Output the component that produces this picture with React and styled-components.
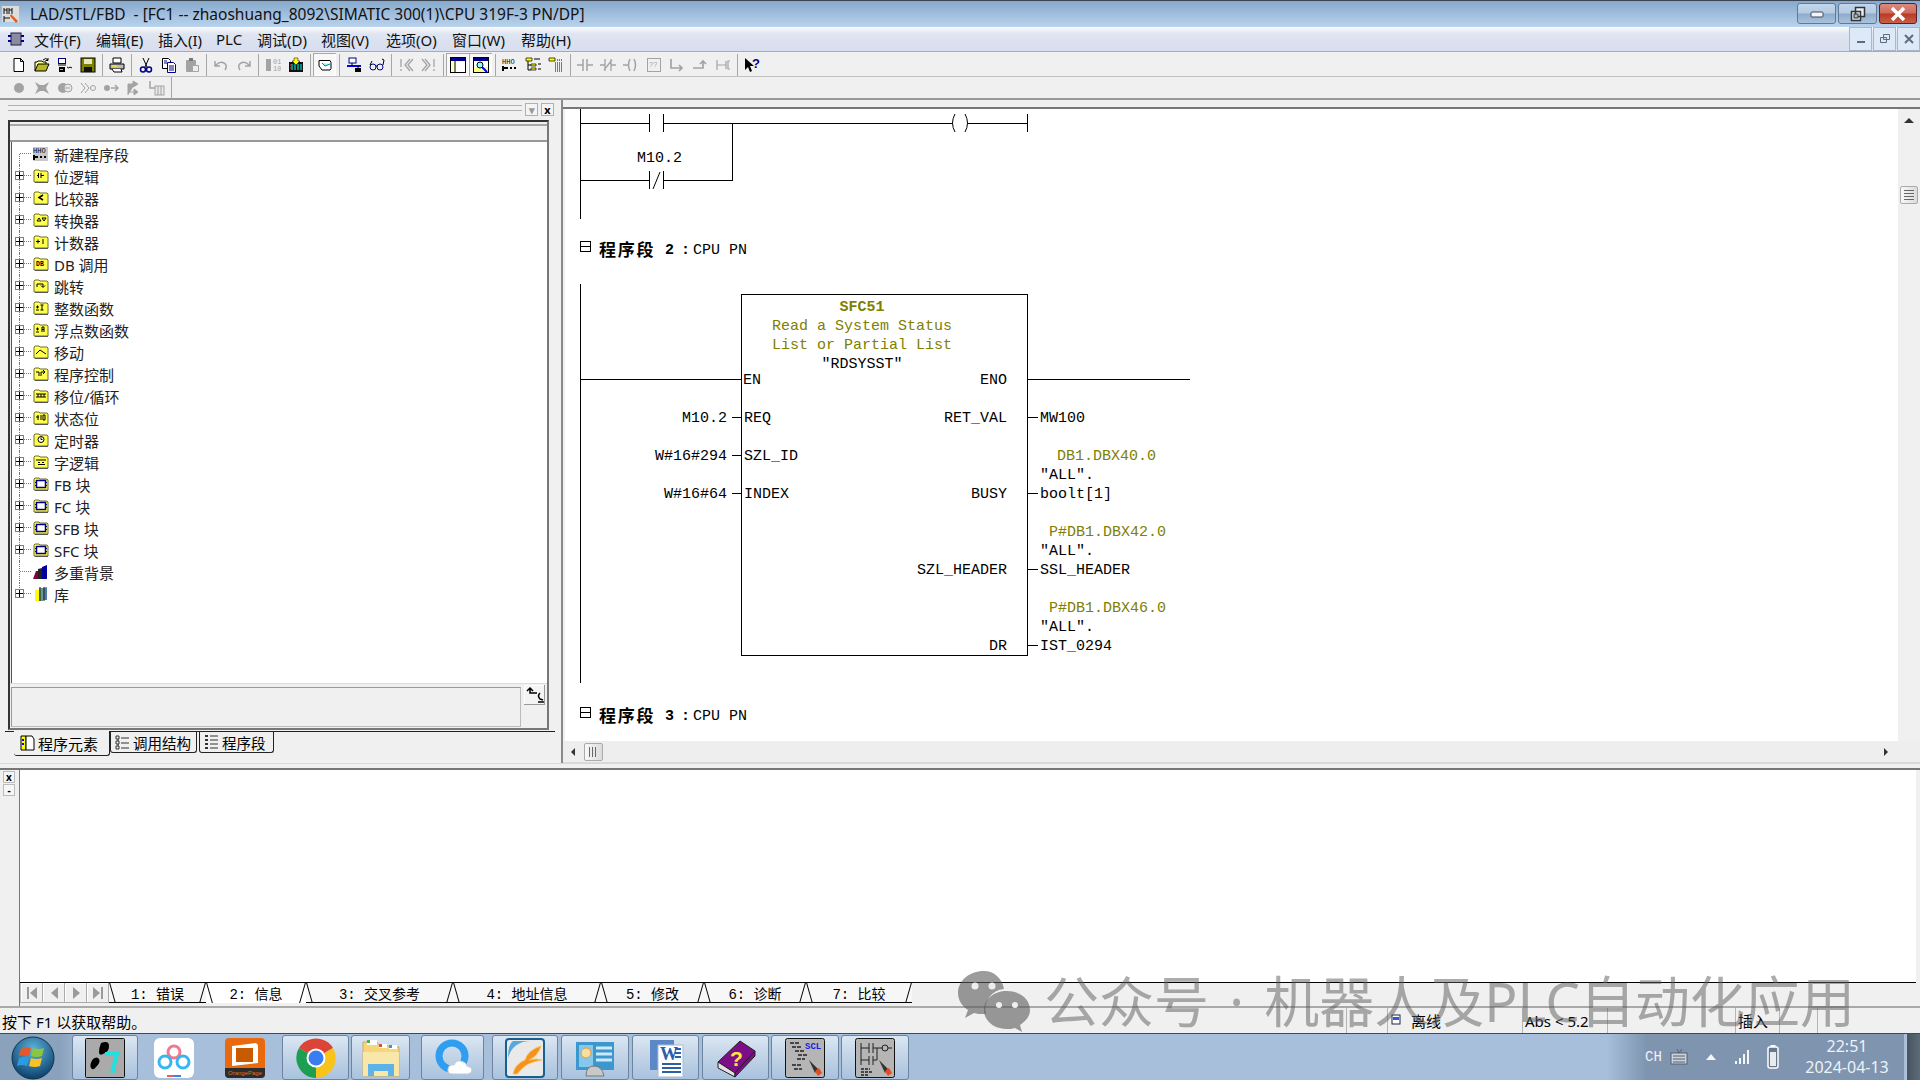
import styled, { createGlobalStyle } from 'styled-components';

const UI_FONT = '"Noto Sans", "Noto Sans CJK SC", sans-serif';
const MONO_FONT = '"Liberation Mono", "Noto Sans CJK SC", monospace';
const GREY = '#a3a3a3';

const GlobalStyle = createGlobalStyle`
    html, body { margin: 0; padding: 0; background: #f0f0f0; overflow: hidden; }
    * { box-sizing: border-box; }
`;

const Screen = styled.div`
    position: relative;
    width: 1920px;
    height: 1080px;
    display: flex;
    flex-direction: column;
    overflow: hidden;
    background: #f0f0f0;
    color: #000;
    font: 14px ${UI_FONT};
`;

/* title + menu */
const TitleBar = styled.div`
    height: 27px;
    flex: none;
    display: flex;
    align-items: center;
    padding-left: 2px;
    border-top: 1px solid #3c4652;
    background: linear-gradient(#86a9cb, #a3c0de 55%, #b9d3ec);
`;
const TitleText = styled.span`
    margin-left: 10px;
    font-size: 15.5px;
    color: #111;
    white-space: pre;
`;
const WindowButtons = styled.div`
    margin-left: auto;
    display: flex;
    gap: 2px;
    padding-right: 3px;
    align-self: flex-start;
    margin-top: 2px;
`;
const WindowButton = styled.div`
    width: ${(p) => (p.$close ? 38 : 39)}px;
    height: 21px;
    display: flex;
    align-items: center;
    justify-content: center;
    border: 1px solid ${(p) => (p.$close ? '#5b2030' : '#5f7a97')};
    border-radius: 3px;
    background: ${(p) =>
        p.$close
            ? 'linear-gradient(#d98a80, #d06a5c 48%, #b83a22 52%, #c8604a)'
            : 'linear-gradient(#c3d6ea, #b4cbe3 48%, #8fabc9 52%, #a9c3de)'};
`;
const MenuBar = styled.div`
    height: 25px;
    flex: none;
    display: flex;
    align-items: center;
    font-size: 15px;
    border-bottom: 1px solid #a5acb8;
    background: linear-gradient(#fbfcfe, #dfe4f1 30%, #d8deee);
`;
const MenuGrip = styled.span`
    width: 34px;
    display: flex;
    justify-content: center;
    padding-right: 2px;
`;
const MenuItem = styled.span`
    width: ${(p) => p.$w}px;
    color: #111;
`;
const MdiButtons = styled.div`
    margin-left: auto;
    display: flex;
    gap: 1px;
    align-self: stretch;
`;
const MdiButton = styled.div`
    width: 23px;
    display: flex;
    align-items: center;
    justify-content: center;
    border: 1px solid #a9b8c9;
    background: #dde9f6;
`;

/* toolbars */
const ToolRow = styled.div`
    height: ${(p) => p.$h}px;
    flex: none;
    padding: ${(p) => p.$nudge || 0}px 0 0 7px;
    display: flex;
    align-items: center;
    border-bottom: ${(p) => p.$line};
`;
const ToolButton = styled.span`
    width: 23px;
    height: 23px;
    flex: none;
    display: flex;
    align-items: center;
    justify-content: center;
    ${(p) => p.$pressed && 'background: #f8f8f8; box-shadow: inset 1px 1px 0 #a8a8a8, inset -1px -1px 0 #fff;'}
`;
const ToolSep = styled.span`
    width: 6px;
    height: 22px;
    flex: none;
    display: flex;
    justify-content: center;
    &::after { content: ''; width: 1px; background: #a6a6a6; }
`;

/* workspace */
const Workspace = styled.div`
    height: 664px;
    flex: none;
    display: flex;
    border-bottom: 1px solid #d8d8d8;
`;
const LeftPane = styled.div`
    width: 563px;
    flex: none;
    display: flex;
    flex-direction: column;
    border-right: 2px solid #8a8a8a;
`;
const GripRow = styled.div`
    height: 20px;
    display: flex;
    align-items: flex-start;
    gap: 3px;
    padding: 5px 0 0 8px;
`;
const GripLines = styled.div`
    width: 514px;
    height: 6px;
    flex: none;
    border-top: 1px solid #b0b0b0;
    border-bottom: 1px solid #b0b0b0;
`;
const GripButton = styled.div`
    width: 13px;
    height: 13px;
    flex: none;
    margin-top: -2px;
    display: flex;
    align-items: center;
    justify-content: center;
    font: bold 11px ${UI_FONT};
    line-height: 1;
    background: #f4f4f4;
    border: 1px solid #b0b0b0;
    color: ${(p) => p.$ink};
`;
const PanelFrame = styled.div`
    margin-left: 8px;
    width: 541px;
    height: 610px;
    display: flex;
    flex-direction: column;
    border: 2px solid;
    border-color: #333 #777 #777 #333;
`;
const PanelHead = styled.div`
    height: 18px;
    flex: none;
    border-top: 2px solid #a8a8a8;
    margin-top: 2px;
    border-bottom: 2px solid #999;
`;
const TreeBox = styled.div`
    flex: 1;
    background: #fff;
    margin-left: 1px;
    border-left: 1px solid #555;
    padding-top: 1px;
`;
const TreeRow = styled.div`
    position: relative;
    height: 22px;
    padding-left: 21px;
    display: flex;
    align-items: center;
    font-size: 15px;
    color: #222;
    &::before {
        content: '';
        position: absolute;
        left: 7px;
        top: ${(p) => (p.$first ? 11 : 0)}px;
        height: ${(p) => (p.$last ? 11 : p.$first ? 11 : 22)}px;
        border-left: 1px dotted #777;
    }
    &::after {
        content: '';
        position: absolute;
        left: 8px;
        top: 10px;
        width: 11px;
        border-top: 1px dotted #777;
    }
`;
const Expander = styled.span`
    position: absolute;
    z-index: 1;
    left: 3px;
    top: 6px;
    width: 9px;
    height: 9px;
    border: 1px solid #808080;
    background: linear-gradient(to bottom, transparent 3px, #000 3px, #000 4px, transparent 4px),
        linear-gradient(to right, transparent 3px, #000 3px, #000 4px, transparent 4px), #fff;
`;
const TreeLabel = styled.span`
    margin-left: 5px;
    white-space: pre;
`;
const HintRow = styled.div`
    height: 45px;
    flex: none;
    display: flex;
    align-items: flex-start;
    gap: 3px;
    padding: 3px 0 0 1px;
    border-top: 1px solid #dcdcdc;
`;
const HintField = styled.div`
    width: 510px;
    height: 40px;
    border: 1px solid #bbb;
    border-top-color: #999;
    border-left-color: #999;
`;
const HintButton = styled.div`
    width: 21px;
    height: 20px;
    margin-top: -2px;
    overflow: hidden;
    background: #f4f4f4;
    box-shadow: inset -1px -1px 0 #999, inset 1px 1px 0 #fff;
`;
const PanelTabs = styled.div`
    display: flex;
    padding-left: 9px;
    border-top: 1px solid #222;
    margin: 1px 6px 0 5px;
    height: 27px;
    align-items: flex-start;
`;
const PanelTab = styled.div`
    width: ${(p) => p.$w}px;
    height: ${(p) => (p.$active ? 25 : 21)}px;
    margin-top: ${(p) => (p.$active ? -1 : 0)}px;
    margin-right: ${(p) => (p.$active ? 0 : 2)}px;
    display: flex;
    align-items: center;
    gap: 3px;
    padding-left: ${(p) => (p.$active ? 5 : 3)}px;
    font-size: ${(p) => (p.$active ? 15 : 14.5)}px;
    white-space: pre;
    border: solid #222;
    border-width: 0 1px 1px ${(p) => (p.$active ? 0 : 1)}px;
    border-radius: 0 0 3px 3px;
    background: #f0f0f0;
`;

const RightPane = styled.div`
    flex: 1;
    display: flex;
    flex-direction: column;
    min-width: 0;
`;
const RightTop = styled.div`
    height: 9px;
    flex: none;
    border-bottom: 2px solid #777;
`;
const EditorRow = styled.div`
    flex: 1;
    display: flex;
    min-height: 0;
`;
const Canvas = styled.div`
    flex: 1;
    margin-left: 2px;
    background: #fff;
    display: flex;
    flex-direction: column;
    align-items: flex-start;
    overflow: hidden;
`;
const Rung = styled.svg`
    display: block;
    flex: none;
    shape-rendering: crispEdges;
`;
const Label = styled.text`
    font: ${(p) => (p.$bold ? 'bold ' : '')}15px ${MONO_FONT};
    fill: ${(p) => (p.$olive ? '#808000' : '#000')};
    shape-rendering: auto;
`;
const NetworkHead = styled.div`
    margin: ${(p) => p.$top}px 0 ${(p) => p.$bottom}px 15px;
    height: 22px;
    display: flex;
    align-items: center;
    white-space: pre;
`;
const Collapse = styled.span`
    width: 11px;
    height: 11px;
    margin: -5px 8px 0 0;
    border: 1px solid #000;
    background: linear-gradient(to bottom, transparent 4px, #000 4px, #000 5px, transparent 5px);
`;
const NetworkTitle = styled.span`
    width: 66px;
    margin-top: -2px;
    font: bold 17px "Noto Sans CJK SC", sans-serif;
    letter-spacing: 1.7px;
`;
const NetworkNumber = styled.span`
    width: 28px;
    margin-top: 2px;
    font: bold 15px ${MONO_FONT};
    letter-spacing: 7px;
`;
const NetworkName = styled.span`
    margin-top: 2px;
    font: 15px ${MONO_FONT};
`;
const VScroll = styled.div`
    width: 22px;
    flex: none;
    display: flex;
    flex-direction: column;
    align-items: center;
    padding-top: 9px;
    background: #f0f0f0;
`;
const Thumb = styled.div`
    width: ${(p) => p.$w}px;
    height: ${(p) => p.$h}px;
    display: flex;
    align-items: center;
    justify-content: center;
    border: 1px solid #aaa;
    border-radius: 2px;
    background: linear-gradient(to right, #f8f8f8, #dcdcdc);
`;
const Grooves = styled.span`
    width: ${(p) => p.$w}px;
    height: ${(p) => p.$h}px;
    background: repeating-linear-gradient(${(p) => p.$dir}, #666 0 1px, transparent 1px 3px);
`;
const ArrowUp = styled.span`
    width: 0;
    height: 0;
    margin-bottom: 63px;
    border: 5px solid transparent;
    border-top: 0;
    border-bottom: 5px solid #333;
`;
const HScroll = styled.div`
    height: 22px;
    flex: none;
    display: flex;
    align-items: center;
    padding: 0 32px 0 8px;
    gap: 9px;
    background: #eeeeee;
    border-bottom: 1px solid #dadada;
`;
const ArrowSide = styled.span`
    width: 0;
    height: 0;
    border: 4px solid transparent;
    ${(p) => (p.$right ? 'margin-left: auto; border-right: 0; border-left: 4px solid #333;' : 'border-left: 0; border-right: 4px solid #333;')}
`;

/* output window */
const Splitter = styled.div`
    height: 6px;
    flex: none;
    border-bottom: 2px solid #777;
`;
const OutputPane = styled.div`
    height: 238px;
    flex: none;
    display: flex;
    border-bottom: 2px solid #a9a9a9;
`;
const OutputGutter = styled.div`
    width: 19px;
    flex: none;
    padding: 1px 0 0 3px;
    display: flex;
    flex-direction: column;
    gap: 1px;
`;
const DockButton = styled.div`
    width: 12px;
    height: 12px;
    display: flex;
    align-items: center;
    justify-content: center;
    font: bold 10px ${UI_FONT};
    background: #f6f6f6;
    border: 1px solid #bbb;
`;
const OutputMain = styled.div`
    width: 1897px;
    display: flex;
    flex-direction: column;
    border-left: 1px solid #777;
`;
const OutputBody = styled.div`
    height: 213px;
    background: #fff;
    border-bottom: 1px solid #000;
`;
const TabStrip = styled.div`
    height: 20px;
    display: flex;
    font: 14px ${MONO_FONT};
    border-left: 1px solid #bbb;
`;
const NavButton = styled.span`
    width: 22px;
    display: flex;
    align-items: center;
    justify-content: center;
    gap: 1px;
    background: #f0f0f0;
    box-shadow: inset -1px -1px 0 #aaa, inset 1px 1px 0 #fff;
`;
const NavTriangle = styled.span`
    width: 0;
    height: 0;
    border: 6px solid transparent;
    ${(p) => (p.$left ? 'border-left: 0; border-right: 7px solid #9a9a9a;' : 'border-right: 0; border-left: 7px solid #9a9a9a;')}
`;
const NavStop = styled.span`
    width: 2px;
    height: 12px;
    background: #9a9a9a;
`;
const OutputTab = styled.div`
    position: relative;
    width: ${(p) => p.$w}px;
    flex: none;
    display: flex;
    align-items: center;
    justify-content: center;
    white-space: pre;
    background: ${(p) => (p.$active ? '#fff' : '#f7f7f7')};
    border-bottom: 1px solid ${(p) => (p.$active ? '#fff' : '#000')};
    &::before, &::after {
        content: '';
        position: absolute;
        top: 0;
        bottom: -1px;
        width: 1px;
        background: #000;
    }
    &::before { left: 3px; transform: skewX(16deg); }
    &::after { right: 3px; transform: skewX(-16deg); }
`;

/* status + taskbar */
const StatusBar = styled.div`
    height: 25px;
    flex: none;
    display: flex;
    align-items: center;
    padding-left: 2px;
    font-size: 15px;
    white-space: pre;
`;
const StatusCell = styled.div`
    width: ${(p) => p.$w}px;
    height: 100%;
    flex: none;
    padding-left: 2px;
    display: flex;
    align-items: center;
    gap: 9px;
    border-left: 1px solid #b5b5b5;
`;
const StatusHelp = styled.div`
    flex: 1;
    padding-top: 1px;
`;
const Taskbar = styled.div`
    height: 47px;
    flex: none;
    display: flex;
    gap: 2px;
    padding-top: 1px;
    border-top: 1px solid #3d4a59;
    background: linear-gradient(to right, #8ba2bc 0, #8ba2bc 60px, #a7bfdb 90px);
`;
const StartOrb = styled.div`
    width: 70px;
    flex: none;
    display: flex;
    align-items: center;
    justify-content: center;
    padding-right: 4px;
`;
const TaskButton = styled.div`
    width: ${(p) => p.$w}px;
    margin-left: ${(p) => p.$gap || 0}px;
    flex: none;
    display: flex;
    align-items: center;
    justify-content: center;
    border-radius: 3px;
    ${(p) => !p.$flat && 'border: 1px solid #6d84a0; background: linear-gradient(#dbe7f3, #c3d5e8 45%, #a9c2dd);'}
`;
const Tray = styled.div`
    margin-left: auto;
    width: 297px;
    display: flex;
    align-items: center;
    background: linear-gradient(to right, #a7bfdb, #7e94af 40px);
    color: #eef3f8;
    margin-top: -1px;
`;
const TrayLang = styled.span`
    margin-left: 38px;
    font: 14px ${MONO_FONT};
    width: 19px;
`;
const TrayIcons = styled.div`
    display: flex;
    align-items: center;
    margin-left: 6px;
    gap: 17px;
`;
const Clock = styled.div`
    margin-left: 23px;
    width: 90px;
    display: flex;
    flex-direction: column;
    align-items: center;
    gap: 4px;
    font-size: 16px;
    line-height: 17px;
    white-space: nowrap;
`;
const ShowDesktop = styled.div`
    width: 14px;
    margin-top: -1px;
    flex: none;
    background: linear-gradient(to right, #47525f, #5c6a79);
    box-shadow: inset 1px 0 0 #b5c4d4;
`;
const Watermark = styled.div`
    position: absolute;
    left: 957px;
    top: 968px;
    display: flex;
    align-items: center;
    gap: 13px;
    white-space: pre;
    font: 55px "Noto Sans", "Noto Sans CJK SC", sans-serif;
    word-spacing: 6px;
    line-height: 66px;
    color: rgba(90, 90, 90, 0.5);
    pointer-events: none;
`;

const Icon = ({ size = 16, box = 16, children }) => (
    <svg width={size} height={size} viewBox={`0 0 ${box} ${box}`}>
        {children}
    </svg>
);

const TOOL_ICONS = {
    new: <path d="M3 1.500h6.500l3 3v10h-9.500zM9.500 1.500v3h3" fill="#fff" stroke="#000" />,
    open: (
        <>
            <path d="M1 14V5h2l1-1h4l1 1h3v2" fill="#ffffa0" stroke="#000" />
            <path d="M1 14l3-7h11l-3 7z" fill="#b8b820" stroke="#000" />
            <path d="M9 3q3-3 5 0M14 1v2.500h-2.500" fill="none" stroke="#000" />
        </>
    ),
    station: (
        <>
            <rect x="1.500" y="1.500" width="7" height="5" fill="#fff" stroke="#00008b" />
            <path d="M1 8h8" stroke="#000" />
            <rect x="2" y="10" width="6" height="5" fill="#000" />
            <rect x="3" y="12" width="3" height="1" fill="#0ff" />
            <path d="M10 10q2 2 3 0l2 1" fill="none" stroke="#000" />
        </>
    ),
    save: (
        <>
            <rect x="1" y="1" width="14" height="14" fill="#808000" stroke="#000" />
            <rect x="4" y="2" width="8" height="5" fill="#e8e8c0" />
            <rect x="4" y="10" width="8" height="5" fill="#111" />
        </>
    ),
    print: (
        <>
            <path d="M4 1h8v5H4z" fill="#fff" stroke="#000" />
            <path d="M1 7h14v5H1z" fill="#bbb" stroke="#000" />
            <path d="M3 12l2 3h8l-1-3" fill="#fff" stroke="#000" />
            <path d="M3 9h5" stroke="#ff0" />
        </>
    ),
    cut: (
        <>
            <path d="M5 1l4 9M11 1l-4 9" stroke="#000" fill="none" />
            <circle cx="5" cy="12.500" r="2.500" fill="none" stroke="#00008b" strokeWidth="1.500" />
            <circle cx="11" cy="12.500" r="2.500" fill="none" stroke="#00008b" strokeWidth="1.500" />
        </>
    ),
    copy: (
        <>
            <path d="M1.500 1.500h6l2 2v8h-8z" fill="#fff" stroke="#000" />
            <path d="M6.500 5.500h6l2 2v8h-8z" fill="#fff" stroke="#00008b" />
            <path d="M8 9h5M8 11h5M8 13h5M3 4h3M3 6h3" stroke="#00008b" />
        </>
    ),
    paste: (
        <>
            <rect x="2" y="3" width="10" height="12" rx="1" fill={GREY} />
            <rect x="5" y="1" width="4" height="3" fill="#777" />
            <path d="M8.500 8.500h6v6h-6z" fill="#eee" stroke={GREY} />
        </>
    ),
    undo: <path d="M2 4v5h5M3 8q4-4 8-2t1 7" fill="none" stroke={GREY} strokeWidth="1.500" />,
    redo: <path d="M14 4v5H9M13 8q-4-4-8-2t-1 7" fill="none" stroke={GREY} strokeWidth="1.500" />,
    ladderOff: (
        <>
            <path d="M1 2h5v12H1zM3 5h1v6H3z" fill={GREY} />
            <text x="8" y="7" fontSize="7" fontFamily="Liberation Mono" fill={GREY}>01</text>
            <text x="8" y="14" fontSize="7" fontFamily="Liberation Mono" fill={GREY}>10</text>
        </>
    ),
    download: (
        <>
            <rect x="1" y="5" width="14" height="10" fill="#111" />
            <path d="M4 7v6M7 7v6M10 7v6M13 7v6" stroke="#0ff" />
            <path d="M6 1h4v3h2l-4 4-4-4h2z" fill="#ff0" stroke="#000" strokeWidth=".5" />
            <path d="M2 8h1M2 11h1" stroke="#f33" />
        </>
    ),
    online: (
        <>
            <path d="M2 3.500h11l1 2v6l-1 1.500H5L2 9z" fill="#fff" stroke="#000" />
            <path d="M5 6l3 3 5-2" fill="#8fe" stroke="#088" />
        </>
    ),
    node: (
        <>
            <rect x="3" y="1" width="7" height="5" fill="#fff" stroke="#00008b" />
            <path d="M1 9h14" stroke="#00f" strokeWidth="2" />
            <path d="M6 6v3M12 9v2" stroke="#000" />
            <rect x="9" y="11" width="6" height="4" fill="#000" />
        </>
    ),
    glasses: (
        <>
            <circle cx="4" cy="10" r="3" fill="none" stroke="#00008b" />
            <circle cx="11" cy="10" r="3" fill="none" stroke="#00008b" />
            <path d="M7 9h1M14 8l1-5-2-1M1 8l2-4" fill="none" stroke="#000" />
        </>
    ),
    bangLeft: <path d="M3 2v8M3 12v2M12 2L7 8l5 6M15 2l-5 6 5 6" fill="none" stroke={GREY} strokeWidth="1.300" />,
    bangRight: <path d="M13 2v8M13 12v2M4 2l5 6-5 6M1 2l5 6-5 6" fill="none" stroke={GREY} strokeWidth="1.300" />,
    window: (
        <>
            <rect x=".5" y=".5" width="15" height="15" fill="#ffffc0" stroke="#000" />
            <rect x="1" y="1" width="14" height="3" fill="#00008b" />
            <path d="M5 4v11" stroke="#000" />
            <rect x="6" y="5" width="9" height="10" fill="#fff" />
        </>
    ),
    inspect: (
        <>
            <rect x=".5" y=".5" width="15" height="15" fill="#ffff80" stroke="#000" />
            <rect x="1" y="1" width="14" height="3" fill="#00008b" />
            <rect x="1" y="4" width="14" height="6" fill="#fff" />
            <circle cx="7" cy="8" r="3" fill="#8ff" stroke="#000" />
            <path d="M9 10l5 5" stroke="#00f" strokeWidth="2" />
        </>
    ),
    network: (
        <>
            <text x="0" y="7" fontSize="7" fontFamily="Liberation Mono" fill="#000">HHO</text>
            <path d="M1 9v5M1 11h5M8 11h2M12 11h2" stroke="#000" strokeWidth="2" />
        </>
    ),
    list: (
        <>
            <path d="M1 1h6v3H1zM6 7h5v2H6zM6 11h5v2H6z" fill="#ff0" stroke="#000" strokeWidth=".7" />
            <path d="M3 4v9h3M3 8h3M9 2h6M13 7h3M13 12h3" stroke="#000" fill="none" />
        </>
    ),
    dots: (
        <>
            <path d="M1 1h6v3H1z" fill="#ff0" stroke="#000" strokeWidth=".7" />
            <path d="M7 6h8M7 8h8M7 10h8M7 12h8M7 14h8" stroke="#000" strokeDasharray="1 1" />
            <path d="M9 3h5" stroke="#000" strokeDasharray="1 1" />
        </>
    ),
    no: <path d="M0 8h6M6 2v12M10 2v12M10 8h6" stroke={GREY} strokeWidth="1.500" fill="none" />,
    nc: <path d="M0 8h5M5 2v12M11 2v12M11 8h5M4 13l8-10" stroke={GREY} strokeWidth="1.300" fill="none" />,
    coil: <path d="M0 8h5M7 2q-3 6 0 12M11 2q3 6 0 12" stroke={GREY} strokeWidth="1.500" fill="none" />,
    unknown: (
        <>
            <rect x="1.500" y="1.500" width="13" height="13" fill="none" stroke={GREY} />
            <text x="3" y="10" fontSize="7" fontFamily="Liberation Mono" fill={GREY}>??</text>
        </>
    ),
    branchDown: <path d="M2 2v9h10M10 8l3 3-3 3" stroke={GREY} strokeWidth="1.700" fill="none" />,
    branchUp: <path d="M1 11h10V5M8 7l3-3 3 3" stroke={GREY} strokeWidth="1.700" fill="none" />,
    jump: <path d="M2 3v10M2 8h9M11 4v8M15 4h-2v8h2" stroke={GREY} strokeWidth="1.200" fill="none" />,
    help: (
        <>
            <path d="M1 1v12l3-3 2 5 2-1-2-5h4z" fill="#000" />
            <text x="8" y="11" fontSize="13" fontWeight="bold" fontFamily="Liberation Sans" fill="#00008b">?</text>
        </>
    ),
    dot: <circle cx="8" cy="8" r="5" fill={GREY} />,
    bug: <path d="M1 2l5 3h4l5-3-3 6 3 6-5-3H6l-5 3 3-6z" fill={GREY} />,
    stepIn: (
        <>
            <circle cx="6" cy="8" r="5" fill={GREY} />
            <circle cx="11" cy="8" r="4" fill="#e8e8e8" stroke={GREY} />
            <path d="M8 8h5" stroke={GREY} />
        </>
    ),
    stepOver: (
        <>
            <path d="M1 3l4 5-4 5M5 3l4 5-4 5" stroke={GREY} fill="none" />
            <circle cx="13" cy="8" r="2.500" fill="none" stroke={GREY} />
        </>
    ),
    stepTo: (
        <>
            <circle cx="4" cy="8" r="3" fill={GREY} />
            <path d="M8 8h7M12 5l3 3-3 3" stroke={GREY} strokeWidth="1.500" fill="none" />
        </>
    ),
    stepOut: <path d="M2 15V4h7M7 1l5 3-5 3zM2 12h8M8 9l4 3-4 3z" fill={GREY} stroke={GREY} />,
    stepBox: (
        <>
            <path d="M1 1v7h5" stroke={GREY} strokeWidth="1.500" fill="none" />
            <rect x="6" y="6" width="9" height="9" fill="#e8e8e8" stroke={GREY} />
            <path d="M9 6v9M12 6v9" stroke={GREY} />
        </>
    ),
};

const TOOLBAR_ONE = [
    'new', 'open', 'station', 'save', '|', 'print', '|', 'cut', 'copy', 'paste', '|', 'undo', 'redo', '|',
    'ladderOff', 'download', '|', '*online', '|', 'node', 'glasses', '|', 'bangLeft', 'bangRight', '|',
    '*window', '*inspect', '|', 'network', 'list', 'dots', '|', 'no', 'nc', 'coil', 'unknown', 'branchDown',
    'branchUp', 'jump', '|', 'help',
];
const TOOLBAR_TWO = ['dot', 'bug', 'stepIn', 'stepOver', 'stepTo', 'stepOut', 'stepBox', '|'];

function Tools({ items }) {
    return items.map((item, i) => {
        if (item === '|') return <ToolSep key={i} />;
        const pressed = item[0] === '*';
        return (
            <ToolButton key={i} $pressed={pressed}>
                <Icon>{TOOL_ICONS[pressed ? item.slice(1) : item]}</Icon>
            </ToolButton>
        );
    });
}

const FOLDER_GLYPHS = {
    bit: <path d="M4 7.500h2M5.500 5v5M8 5v5M8 7.500h3" stroke="#000" fill="none" />,
    cmp: <path d="M10 5L6 7.500l4 2.500" stroke="#000" strokeWidth="1.500" fill="none" />,
    conv: <path d="M4 9l2-3 2 3zM9 6h4l-2 3z" stroke="#000" fill="none" />,
    count: <path d="M3 7.500h4M5 5.500v4M10 5v5" stroke="#000" fill="none" />,
    db: <text x="3" y="10" fontSize="6.500" fontWeight="bold" fontFamily="Liberation Mono">DB</text>,
    jump: <path d="M4 6h6v3M8 7.500l2 2 2-2M4 6v3" stroke="#000" fill="none" />,
    int: <path d="M3 7h3M4.500 5.500v3M3 10h3M9 5v5M7.500 5h3M7.500 10h3" stroke="#000" fill="none" />,
    real: <path d="M3 7h3M4.500 5.500v3M3 10h3M9 5v5M11 5v5M9 5h2M9 7.500h2" stroke="#000" fill="none" />,
    move: <path d="M3 10l4-4 3 2 3 2" stroke="#000" fill="none" />,
    ctrl: <path d="M3 6h3v4M8 10V6h4M10 4l2 2-2 2" stroke="#000" fill="none" />,
    shift: <path d="M3 6h10M3 9h10M5 6v3M8 6v3M11 6v3" stroke="#000" fill="none" />,
    status: <path d="M3 7h3M5 5v5M8 5v5M10 5h2v5h-2z" stroke="#000" fill="none" />,
    timer: (
        <>
            <circle cx="8" cy="7.500" r="3" fill="#fff" stroke="#000" />
            <path d="M8 5.500v2h1.500" stroke="#000" fill="none" />
        </>
    ),
    word: <path d="M3 6h10M5 8.500h2M9 8.500h2M5 10.500h7" stroke="#000" fill="none" />,
    block: (
        <>
            <rect x="3.500" y="4.500" width="9" height="7" fill="#fff" stroke="#00008b" strokeWidth="1.500" />
            <path d="M2 6.500h2M2 9.500h2M12 6.500h2M12 9.500h2" stroke="#00008b" />
        </>
    ),
};

const Folder = ({ glyph }) => (
    <Icon>
        <path d="M1 14V3l1-1h4l1 1h7l1 1v10z" fill="#ffff4d" stroke="#6f6f30" />
        <path d="M2 14h13v1H2z" fill="#555" />
        <path d="M2 3h4v1H2z" fill="#fff" />
        {FOLDER_GLYPHS[glyph]}
    </Icon>
);

const TREE = [
    ['新建程序段', 'new'], ['位逻辑', 'bit'], ['比较器', 'cmp'], ['转换器', 'conv'], ['计数器', 'count'],
    ['DB 调用', 'db'], ['跳转', 'jump'], ['整数函数', 'int'], ['浮点数函数', 'real'], ['移动', 'move'],
    ['程序控制', 'ctrl'], ['移位/循环', 'shift'], ['状态位', 'status'], ['定时器', 'timer'], ['字逻辑', 'word'],
    ['FB 块', 'block'], ['FC 块', 'block'], ['SFB 块', 'block'], ['SFC 块', 'block'], ['多重背景', 'multi'],
    ['库', 'lib'],
];

function TreeGlyph({ kind }) {
    if (kind === 'new') {
        return (
            <Icon>
                <rect width="15" height="14" y="1" fill="#c8c8c8" />
                <text x="0" y="7" fontSize="7" fontFamily="Liberation Mono">HHO</text>
                <path d="M1 9v5M1 11h4M7 11h2M11 11h2" stroke="#000" strokeWidth="2" />
            </Icon>
        );
    }
    if (kind === 'multi') {
        return (
            <Icon>
                <path d="M0 15l3-8h3v8z" fill="#800040" />
                <path d="M5 15V5l4-1v11z" fill="#222" />
                <path d="M9 15V3l5-2v14z" fill="#0000a0" />
            </Icon>
        );
    }
    if (kind === 'lib') {
        return (
            <Icon>
                <rect x="2" y="4" width="4" height="11" fill="#ffff00" />
                <rect x="6" y="2" width="4" height="13" fill="#6a9a8a" />
                <path d="M10 14V2l4-1v13z" fill="#4a7ea8" />
                <path d="M7 1v14M11 1v14" stroke="#222" />
            </Icon>
        );
    }
    return <Folder glyph={kind} />;
}

function Contact({ x, y, closed }) {
    return (
        <>
            <path d={`M${x + 0.5} ${y - 9}v18M${x + 14.5} ${y - 9}v18`} stroke="#000" fill="none" />
            {closed && <path d={`M${x + 4} ${y + 9}L${x + 11} ${y - 8}`} stroke="#000" fill="none" shapeRendering="auto" />}
        </>
    );
}

const PINS = [
    { y: 417, left: 'REQ', right: 'RET_VAL', input: 'M10.2', output: 'MW100' },
    { y: 455, left: 'SZL_ID', input: 'W#16#294' },
    { y: 493, left: 'INDEX', right: 'BUSY', input: 'W#16#64', output: 'boolt[1]', note: 'DB1.DBX40.0', noteX: 1057 },
    { y: 569, right: 'SZL_HEADER', output: 'SSL_HEADER', note: 'P#DB1.DBX42.0', noteX: 1049 },
    { y: 645, right: 'DR', output: 'IST_0294', note: 'P#DB1.DBX46.0', noteX: 1049 },
];

function RungOne() {
    return (
        <Rung width="700" height="110" viewBox="565 109 700 110">
            <path d="M580.500 109v110M580 123.500h69M663 123.500h289M968 123.500h59M1027.500 114v18" stroke="#000" fill="none" />
            <Contact x={649} y={123} />
            <path d="M955 114q-5 9 0 18M965 114q5 9 0 18" stroke="#000" fill="none" shapeRendering="auto" />
            <Label x="637" y="162">M10.2</Label>
            <path d="M580 180.500h69M663 180.500h70M732.500 123v58" stroke="#000" fill="none" />
            <Contact x={649} y={180} closed />
        </Rung>
    );
}

function RungTwo() {
    return (
        <Rung width="700" height="399" viewBox="565 284 700 399">
            <path d="M580.500 284v399" stroke="#000" />
            <rect x="741.500" y="294.500" width="286" height="361" fill="none" stroke="#000" />
            <path d="M580 379.500h161M1027 379.500h163" stroke="#000" />
            <Label x="862" y="311" textAnchor="middle" $olive $bold>SFC51</Label>
            <Label x="862" y="330" textAnchor="middle" $olive>Read a System Status</Label>
            <Label x="862" y="349" textAnchor="middle" $olive>List or Partial List</Label>
            <Label x="862" y="368" textAnchor="middle">"RDSYSST"</Label>
            <Label x="743" y="384">EN</Label>
            <Label x="1007" y="384" textAnchor="end">ENO</Label>
            {PINS.map((pin) => (
                <g key={pin.y}>
                    {pin.left && <Label x="744" y={pin.y + 5}>{pin.left}</Label>}
                    {pin.input && <Label x="727" y={pin.y + 5} textAnchor="end">{pin.input}</Label>}
                    {pin.input && <path d={`M732 ${pin.y + 0.5}h9`} stroke="#000" />}
                    {pin.right && <Label x="1007" y={pin.y + 5} textAnchor="end">{pin.right}</Label>}
                    {pin.output && <path d={`M1027 ${pin.y + 0.5}h11`} stroke="#000" />}
                    {pin.output && <Label x="1040" y={pin.y + 5}>{pin.output}</Label>}
                    {pin.note && <Label x={pin.noteX} y={pin.y - 33} $olive>{pin.note}</Label>}
                    {pin.note && <Label x="1040" y={pin.y - 14}>"ALL".</Label>}
                </g>
            ))}
        </Rung>
    );
}

function NetworkHeader({ number, top, bottom }) {
    return (
        <NetworkHead $top={top} $bottom={bottom}>
            <Collapse />
            <NetworkTitle>程序段</NetworkTitle>
            <NetworkNumber>{number}:</NetworkNumber>
            <NetworkName>CPU PN</NetworkName>
        </NetworkHead>
    );
}

const OUTPUT_TABS = [
    ['1: 错误', 97], ['2: 信息', 100, true], ['3: 交叉参考', 147], ['4: 地址信息', 148], ['5: 修改', 103],
    ['6: 诊断', 102], ['7: 比较', 106],
];

const TASK_ICONS = {
    steps: (
        <>
            <rect x=".5" y=".5" width="39" height="39" rx="1" fill="#aaa" stroke="#111" />
            <path d="M16 5q8-3 8 3t-6 8q-4 2-4-2t2-9zM8 21q4-3 6 0t-3 8q-3 4-5 1t2-9z" fill="#000" />
            <path d="M20 16h12l-5 19" fill="none" stroke="#20e0e0" strokeWidth="4" />
        </>
    ),
    baidu: (
        <>
            <rect width="40" height="40" rx="6" fill="#fff" />
            <circle cx="20" cy="14" r="6" fill="none" stroke="#f2788f" strokeWidth="3" />
            <circle cx="11" cy="24" r="6" fill="none" stroke="#38b6f1" strokeWidth="3" />
            <circle cx="29" cy="24" r="6" fill="none" stroke="#38b6f1" strokeWidth="3" />
            <rect x="13" y="37" width="7" height="2" fill="#f15a5a" />
            <rect x="20" y="37" width="7" height="2" fill="#3a80f0" />
        </>
    ),
    orange: (
        <>
            <rect width="40" height="40" rx="4" fill="#e9690f" />
            <path d="M0 30h40v6q0 4-4 4H4q-4 0-4-4z" fill="#2c2c2c" />
            <path d="M7 8l24-3 2 2v18l-26 3z" fill="#fff" />
            <rect x="11" y="10" width="17" height="14" fill="#c85a00" />
            <text x="20" y="37" fontSize="6" textAnchor="middle" fontFamily="Liberation Sans" fill="#e07020">OrangePage</text>
        </>
    ),
    chrome: (
        <>
            <path d="M20 20L3 10A20 20 0 0 1 37 10z" fill="#dc4437" />
            <path d="M20 20L37 10A20 20 0 0 1 20 40z" fill="#f8c41c" />
            <path d="M20 20L20 40A20 20 0 0 1 3 10z" fill="#1e9e50" />
            <circle cx="20" cy="20" r="9.500" fill="#fff" />
            <circle cx="20" cy="20" r="7.500" fill="#3a7df0" />
        </>
    ),
    folder: (
        <>
            <path d="M2 38V4h14l2 3h8l2 2h10v29z" fill="#f5d67a" stroke="#cdb060" />
            <path d="M6 2h10v5H6zM18 6h8v4h-8zM28 7h8v4h-8z" fill="#fff" />
            <path d="M6 2h3v3H6z" fill="#4caf50" />
            <path d="M18 6h3v3h-3z" fill="#e04b3a" />
            <path d="M28 7h3v3h-3z" fill="#4a90d9" />
            <path d="M2 14h36v24H2z" fill="#f8e7a8" />
            <path d="M7 38V26h26v12h-6v-5H13v5z" fill="#5db3e8" />
        </>
    ),
    qq: (
        <>
            <circle cx="19" cy="18" r="13" fill="none" stroke="#2f9df0" strokeWidth="7" />
            <path d="M20 36q-6 0-5-5t6-4q2-5 7-4t6 5q5 1 5 4t-4 4z" fill="#fff" stroke="#bcd" />
        </>
    ),
    foxit: (
        <>
            <rect x="1" y="1" width="38" height="38" rx="3" fill="#e9e9e9" stroke="#17608f" strokeWidth="2" />
            <path d="M3 20Q8 3 26 3H8Q3 6 3 20z" fill="#5aa7da" />
            <path d="M8 36q2-10 12-14 3-10 16-14-3 10-12 14 8-2 13 0-12 2-17 6t-8 8z" fill="#f4921e" stroke="#fbbf57" />
        </>
    ),
    panel: (
        <>
            <rect x="1" y="4" width="38" height="28" fill="#3d97cf" />
            <rect x="4" y="7" width="14" height="22" fill="#86c8ec" />
            <circle cx="11" cy="15" r="5" fill="#f4e0a0" stroke="#e69a3a" />
            <path d="M21 10h16M21 16h16M21 22h16" stroke="#cdeafa" strokeWidth="3" />
            <path d="M11 38q0-10 8-10t10 10z" fill="#c8c8c8" stroke="#777" />
        </>
    ),
    word: (
        <>
            <path d="M4 2h24v30H4z" fill="#5d88c8" />
            <path d="M12 7h25v32H12z" fill="#fff" stroke="#a8bcd6" />
            <text x="14" y="22" fontSize="18" fontWeight="bold" fontFamily="Liberation Serif" fill="#2d5ea8">W</text>
            <path d="M29 11h6M29 15h6M29 19h6M16 26h19M16 30h19M16 34h19" stroke="#2d5ea8" strokeWidth="2" />
        </>
    ),
    book: (
        <>
            <path d="M2 24L24 3l15 10-20 22z" fill="#7d0f86" stroke="#222" />
            <path d="M2 24v6l17 9v-4z" fill="#e8dfe8" stroke="#222" />
            <path d="M19 35v4l20-21v-5z" fill="#7d0f86" stroke="#222" />
            <text x="14" y="28" fontSize="21" fontWeight="bold" fontFamily="Liberation Sans" fill="#ffe83a">?</text>
        </>
    ),
    scl: (
        <>
            <rect x=".5" y=".5" width="39" height="39" rx="2" fill="#b5b5b5" stroke="#111" />
            <text x="20" y="11" fontSize="9" fontWeight="bold" fontFamily="Liberation Mono" fill="#1c1ce0">SCL</text>
            <path d="M5 5h9M7 9h9M10 13h10M13 17h9M12 21h8M7 27h10M9 31h8" stroke="#222" strokeWidth="1.500" strokeDasharray="4 1" />
            <path d="M24 22l9 9-3 4z" fill="#333" />
            <path d="M30 33l4-3 3 5-4 3z" fill="#e8491c" />
        </>
    ),
    lad: (
        <>
            <rect x=".5" y=".5" width="39" height="39" rx="2" fill="#b5b5b5" stroke="#111" />
            <path d="M6 5v22M6 10h8M14 5v10M18 5v10M18 10h10M14 18v9M18 18v9M6 22h8M18 22h4M22 10v12M33 10h4" stroke="#222" fill="none" />
            <circle cx="30" cy="10" r="3" fill="none" stroke="#222" />
            <path d="M6 31h9M6 34h11M6 37h7" stroke="#222" strokeWidth="1.500" strokeDasharray="3 1" />
            <path d="M24 22l9 9-3 4z" fill="#333" />
            <path d="M30 33l4-3 3 5-4 3z" fill="#e8491c" />
        </>
    ),
};

const TASKS = [
    { icon: 'steps', w: 66 },
    { icon: 'baidu', w: 67, flat: true },
    { icon: 'orange', w: 71, flat: true },
    { icon: 'chrome', w: 67 },
    { icon: 'folder', w: 59 },
    { icon: 'qq', w: 63, gap: 9 },
    { icon: 'foxit', w: 66, gap: 6 },
    { icon: 'panel', w: 68, gap: 1 },
    { icon: 'word', w: 67, gap: 1 },
    { icon: 'book', w: 67, gap: 1 },
    { icon: 'scl', w: 68 },
    { icon: 'lad', w: 68 },
];

export default function App() {
    return (
        <Screen>
            <GlobalStyle />
            <TitleBar>
                <Icon size={18} box={18}>
                    <rect y="1" width="17" height="16" fill="#ddd" />
                    <path d="M2 3v6M2 5h3M5 3v6M7 3v6M7 5h3M10 3v6M2 11v6M2 13h6" stroke="#111" fill="none" />
                    <path d="M9 9l7 7-2 2-6-7z" fill="#e0601a" />
                </Icon>
                <TitleText>{'LAD/STL/FBD  - [FC1 -- zhaoshuang_8092\\SIMATIC 300(1)\\CPU 319F-3 PN/DP]'}</TitleText>
                <WindowButtons>
                    <WindowButton>
                        <svg width="14" height="8" viewBox="0 0 14 8">
                            <rect x="1" y="2" width="12" height="5" rx="1" fill="#f4f4f4" stroke="#3c4a5c" />
                        </svg>
                    </WindowButton>
                    <WindowButton>
                        <svg width="16" height="16" viewBox="0 0 16 16">
                            <path d="M5.500 1.500h9v9h-9zM1.500 5.500h9v9h-9z" fill="#e8eef5" stroke="#333" strokeWidth="1.500" />
                            <rect x="4" y="8" width="4" height="4" fill="#9db8d3" stroke="#333" />
                        </svg>
                    </WindowButton>
                    <WindowButton $close>
                        <svg width="16" height="14" viewBox="0 0 16 14">
                            <path d="M2 1l12 12M14 1L2 13" stroke="#fff" strokeWidth="3.500" />
                        </svg>
                    </WindowButton>
                </WindowButtons>
            </TitleBar>
            <MenuBar>
                <MenuGrip>
                    <Icon>
                        <rect x="3" y="2" width="10" height="12" fill="#8a8aa0" stroke="#224" />
                        <path d="M0 5h3M0 10h3M13 5h3M13 10h3" stroke="#00008b" strokeWidth="2" />
                    </Icon>
                </MenuGrip>
                {[['文件(F)', 62], ['编辑(E)', 62], ['插入(I)', 58], ['PLC', 41], ['调试(D)', 64], ['视图(V)', 65], ['选项(O)', 66], ['窗口(W)', 69], ['帮助(H)', 70]].map(([text, w]) => (
                    <MenuItem key={text} $w={w}>{text}</MenuItem>
                ))}
                <MdiButtons>
                    <MdiButton>
                        <svg width="10" height="10" viewBox="0 0 10 10"><path d="M1 8h8" stroke="#5d6c80" strokeWidth="2" /></svg>
                    </MdiButton>
                    <MdiButton>
                        <svg width="10" height="10" viewBox="0 0 10 10"><path d="M3.500 .5h6v5h-6zM.5 3.500h6v5h-6z" fill="#dde9f6" stroke="#5d6c80" /></svg>
                    </MdiButton>
                    <MdiButton>
                        <svg width="10" height="10" viewBox="0 0 10 10"><path d="M1 1l8 8M9 1l-8 8" stroke="#5d6c80" strokeWidth="2" /></svg>
                    </MdiButton>
                </MdiButtons>
            </MenuBar>
            <ToolRow $h={25} $nudge={1} $line="1px solid #c0c0c0">
                <Tools items={TOOLBAR_ONE} />
            </ToolRow>
            <ToolRow $h={23} $line="2px solid #999">
                <Tools items={TOOLBAR_TWO} />
            </ToolRow>

            <Workspace>
                <LeftPane>
                    <GripRow>
                        <GripLines />
                        <GripButton $ink="#999">▾</GripButton>
                        <GripButton $ink="#000">x</GripButton>
                    </GripRow>
                    <PanelFrame>
                        <PanelHead />
                        <TreeBox>
                            {TREE.map(([label, kind], i) => (
                                <TreeRow key={label} $first={i === 0} $last={i === TREE.length - 1}>
                                    {i !== 0 && kind !== 'multi' && <Expander />}
                                    <TreeGlyph kind={kind} />
                                    <TreeLabel>{label}</TreeLabel>
                                </TreeRow>
                            ))}
                        </TreeBox>
                        <HintRow>
                            <HintField />
                            <HintButton>
                                <svg width="21" height="20" viewBox="0 0 21 20">
                                    <path d="M3 6l3-3 3 3M6 3v5h7M16 8q-3 3 0 6l3 1M14 17h6" stroke="#000" strokeWidth="1.500" fill="none" />
                                </svg>
                            </HintButton>
                        </HintRow>
                    </PanelFrame>
                    <PanelTabs>
                        <PanelTab $w={96} $active>
                            <Icon>
                                <path d="M2 1h5v14H2z" fill="#ffff00" stroke="#000" />
                                <path d="M7 1h6l2 3v11H7z" fill="#fff" stroke="#000" />
                                <path d="M4 4v8" stroke="#00f" strokeWidth="2" strokeDasharray="2 2" />
                            </Icon>
                            程序元素
                        </PanelTab>
                        <PanelTab $w={87}>
                            <Icon>
                                <path d="M2 2h3v3H2zM2 7h3v3H2zM2 12h3v3H2zM7 4h8M7 9h8M7 14h8M4 5v2M4 10v2" stroke="#333" fill="none" />
                            </Icon>
                            调用结构
                        </PanelTab>
                        <PanelTab $w={75}>
                            <Icon>
                                <path d="M2 2h3M2 6h3M2 10h3M2 14h3" stroke="#333" strokeWidth="2" />
                                <path d="M7 2h8M7 6h8M7 10h8M7 14h8" stroke="#333" />
                            </Icon>
                            程序段
                        </PanelTab>
                    </PanelTabs>
                </LeftPane>
                <RightPane>
                    <RightTop />
                    <EditorRow>
                        <Canvas>
                            <RungOne />
                            <NetworkHeader number="2" top={19} bottom={24} />
                            <RungTwo />
                            <NetworkHeader number="3" top={21} bottom={0} />
                        </Canvas>
                        <VScroll>
                            <ArrowUp />
                            <Thumb $w={18} $h={18}>
                                <Grooves $w={10} $h={10} $dir="to bottom" />
                            </Thumb>
                        </VScroll>
                    </EditorRow>
                    <HScroll>
                        <ArrowSide />
                        <Thumb $w={19} $h={18}>
                            <Grooves $w={9} $h={10} $dir="to right" />
                        </Thumb>
                        <ArrowSide $right />
                    </HScroll>
                </RightPane>
            </Workspace>
            <Splitter />
            <OutputPane>
                <OutputGutter>
                    <DockButton>x</DockButton>
                    <DockButton>-</DockButton>
                </OutputGutter>
                <OutputMain>
                    <OutputBody />
                    <TabStrip>
                        <NavButton><NavStop /><NavTriangle $left /></NavButton>
                        <NavButton><NavTriangle $left /></NavButton>
                        <NavButton><NavTriangle /></NavButton>
                        <NavButton><NavTriangle /><NavStop /></NavButton>
                        {OUTPUT_TABS.map(([label, w, active]) => (
                            <OutputTab key={label} $w={w} $active={active}>{label}</OutputTab>
                        ))}
                    </TabStrip>
                </OutputMain>
            </OutputPane>
            <StatusBar>
                <StatusHelp>按下 F1 以获取帮助。</StatusHelp>
                <StatusCell $w={41} />
                <StatusCell $w={135}>
                    <svg width="12" height="14" viewBox="0 0 12 14">
                        <rect x="2" y="1" width="8" height="9" fill="#fff" stroke="#224" />
                        <rect x="3" y="3" width="6" height="3" fill="#2a5bd0" />
                    </svg>
                    离线
                </StatusCell>
                <StatusCell $w={85}>Abs &lt; 5.2</StatusCell>
                <StatusCell $w={128} />
                <StatusCell $w={44}>插入</StatusCell>
                <StatusCell $w={38} />
                <StatusCell $w={103} />
            </StatusBar>
            <Taskbar>
                <StartOrb>
                    <svg width="44" height="44" viewBox="0 0 44 44">
                        <defs>
                            <radialGradient id="orb" cx="50%" cy="30%" r="70%">
                                <stop offset="0" stopColor="#5fb4dc" />
                                <stop offset="1" stopColor="#0b3f6b" />
                            </radialGradient>
                        </defs>
                        <circle cx="22" cy="22" r="21" fill="url(#orb)" stroke="#12324f" />
                        <path d="M10 13q5-3 10-1l-2 8q-5-2-10 0z" fill="#e8572a" />
                        <path d="M22 12q5 2 11 0l-2 8q-5 2-11 0z" fill="#8cc63f" />
                        <path d="M8 22q5-2 10 0l-2 8q-5-2-10 0z" fill="#2f9ae0" />
                        <path d="M20 22q5 2 11 0l-2 8q-5 2-11 0z" fill="#f7c325" />
                    </svg>
                </StartOrb>
                {TASKS.map((task) => (
                    <TaskButton key={task.icon} $w={task.w} $flat={task.flat} $gap={task.gap}>
                        <Icon size={40} box={40}>{TASK_ICONS[task.icon]}</Icon>
                    </TaskButton>
                ))}
                <Tray>
                    <TrayLang>CH</TrayLang>
                    <TrayIcons>
                        <svg width="18" height="18" viewBox="0 0 18 18">
                            <rect x="1" y="5" width="16" height="11" fill="#c9d3de" stroke="#55606d" />
                            <path d="M3 8h12M3 11h12M3 14h12M7 1l2 4 3-4" stroke="#55606d" fill="none" />
                        </svg>
                        <svg width="12" height="8" viewBox="0 0 12 8"><path d="M6 1l5 6H1z" fill="#f2f6fa" /></svg>
                        <svg width="16" height="16" viewBox="0 0 16 16">
                            <path d="M1 12h2v3H1zM5 9h2v6H5zM9 5h2v10H9zM13 1h2v14h-2z" fill="#f4f7fa" />
                        </svg>
                        <svg width="12" height="24" viewBox="0 0 12 24">
                            <rect x="3.500" y="0" width="5" height="2" fill="#fff" />
                            <rect x="1" y="2" width="10" height="21" rx="2" fill="#68788c" stroke="#fff" strokeWidth="1.500" />
                            <rect x="3" y="7" width="6" height="14" fill="#e6ecf2" />
                        </svg>
                    </TrayIcons>
                    <Clock>
                        <span>22:51</span>
                        <span>2024-04-13</span>
                    </Clock>
                </Tray>
                <ShowDesktop />
            </Taskbar>
            <Watermark>
                <svg width="74" height="62" viewBox="0 0 74 62">
                    <path d="M27 1C12 1 1 11 1 23c0 7 4 13 10 17l-3 8 9-5c3 1 6 1 10 1h2a20 20 0 0 1 18-25C45 8 37 1 27 1z" fill="rgba(90,90,90,0.6)" />
                    <path d="M50 21c-13 0-23 8-23 19s10 19 23 19c3 0 5 0 8-1l7 4-2-7c6-4 10-9 10-15 0-11-10-19-23-19z" fill="rgba(90,90,90,0.6)" />
                    <circle cx="18" cy="16" r="3.500" fill="#eee" />
                    <circle cx="35" cy="16" r="3.500" fill="#eee" />
                    <circle cx="42" cy="35" r="3" fill="#eee" />
                    <circle cx="58" cy="35" r="3" fill="#eee" />
                </svg>
                <span>公众号 · 机器人及PLC自动化应用</span>
            </Watermark>
        </Screen>
    );
}
